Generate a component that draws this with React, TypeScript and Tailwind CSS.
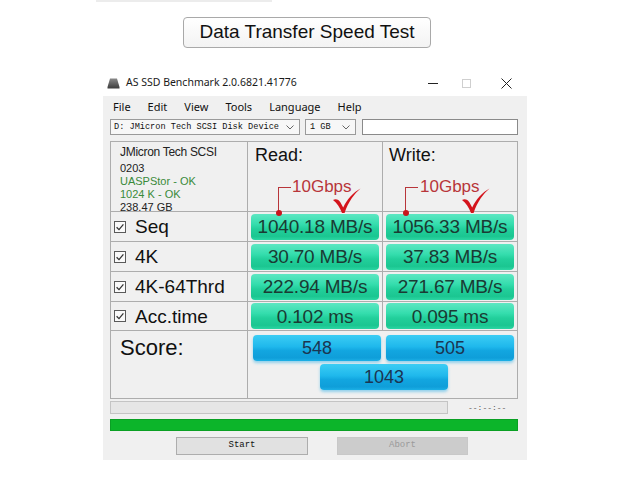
import React from "react";

const sans = "font-['Liberation_Sans',Arial,sans-serif]";
const ui = "font-['Noto_Sans','Liberation_Sans',sans-serif]";
const mono = "font-['Liberation_Mono','Courier_New',monospace]";

function CheckBox() {
  return (
    <svg width="12" height="12" viewBox="0 0 12 12" className="shrink-0">
      <rect x="0.5" y="0.5" width="11" height="11" fill="#fafafa" stroke="#5a5a5a" />
      <path d="M2.6 6.2 L5 8.6 L9.4 3.4" fill="none" stroke="#333" strokeWidth="1.3" />
    </svg>
  );
}

function Val({ v }: { v: string }) {
  return (
    <div className="h-[26px] w-full rounded-[4px] bg-[linear-gradient(to_bottom,#5de7c2_0%,#34ddad_40%,#22cf9b_58%,#1bc691_86%,#2bd6a3_100%)] flex items-center justify-center text-[19px] leading-none text-[#1a3b33] tracking-[-0.2px]">
      {v}
    </div>
  );
}

function Score({ v, w = "w-[128px]" }: { v: string; w?: string }) {
  return (
    <div
      className={`${w} h-[26px] rounded-[4px] bg-[linear-gradient(to_bottom,#3ccdf4_0%,#1fb8ec_45%,#12a6e0_60%,#0f9ed9_88%,#1cb0e6_100%)] shadow-[0_2px_3px_rgba(30,170,230,0.45)] flex items-center justify-center text-[18px] leading-none text-[#1b3552]`}
    >
      {v}
    </div>
  );
}

function RedCheck({ x }: { x: number }) {
  return (
    <svg
      width="28"
      height="26"
      viewBox="0 0 28 26"
      className="absolute"
      style={{ left: x, top: 46 }}
    >
      <path
        d="M0 12 C3 10.5 5.5 11.5 7.5 14.5 L10.2 19.5 C14 11.5 20 4.5 27.5 0.5 C21 6 15.5 13.5 11.6 25 L9 25 C6.8 19.5 4 15 0 12 Z"
        fill="#d4141c"
      />
    </svg>
  );
}

function Bracket({ x }: { x: number }) {
  return (
    <>
      <div className="absolute w-[1px] h-[26px] bg-[#b8353a]" style={{ left: x, top: 45 }} />
      <div className="absolute h-[1px] w-[13px] bg-[#b8353a]" style={{ left: x, top: 45 }} />
      <div className="absolute w-[6px] h-[6px] rounded-full bg-[#c8141c]" style={{ left: x - 2.5, top: 68 }} />
    </>
  );
}

const rows: [string, string, string][] = [
  ["Seq", "1040.18 MB/s", "1056.33 MB/s"],
  ["4K", "30.70 MB/s", "37.83 MB/s"],
  ["4K-64Thrd", "222.94 MB/s", "271.67 MB/s"],
  ["Acc.time", "0.102 ms", "0.095 ms"],
];

export default function App() {
  return (
    <div className={`w-[640px] h-[480px] bg-white overflow-hidden ${sans}`}>
      {/* faint rule along the top edge */}
      <div className="ml-[96px] w-[176px] h-[2px] bg-[#ececec]" />

      {/* caption button */}
      <div className="mt-[15px] ml-[183px] w-[248px] h-[31px] rounded-[4px] border border-[#a9a9a9] bg-[linear-gradient(to_bottom,#ffffff,#f3f3f3)] flex items-center justify-center text-[19px] text-[#111]">
        Data Transfer Speed Test
      </div>

      {/* benchmark window */}
      <div className="mt-[22px] ml-[103px] w-[424px]">
        {/* title bar */}
        <div className={`h-[26px] bg-white flex items-center ${ui}`}>
          <svg width="13" height="11" viewBox="0 0 13 11" className="ml-[4px]">
            <defs>
              <linearGradient id="disk" x1="0" y1="0" x2="0" y2="1">
                <stop offset="0" stopColor="#8a8a8a" />
                <stop offset="1" stopColor="#3c3c3c" />
              </linearGradient>
            </defs>
            <path d="M3 0.5 H10 L12.5 9 V10.5 H0.5 V9 Z" fill="url(#disk)" />
          </svg>
          <span className="ml-[6px] text-[10.5px] text-[#1a1a1a]">AS SSD Benchmark 2.0.6821.41776</span>
          <div className="flex-1" />
          <div className="w-[10px] h-[1px] bg-[#222]" />
          <div className="ml-[24px] w-[9px] h-[9px] border border-[#cfcfcf]" />
          <svg width="11" height="11" viewBox="0 0 11 11" className="ml-[30px] mr-[15px]">
            <path d="M0.5 0.5 L10.5 10.5 M10.5 0.5 L0.5 10.5" stroke="#222" strokeWidth="1" />
          </svg>
        </div>

        {/* window body */}
        <div className="h-[364px] bg-[#f0f0f0] px-[7px]">
          {/* menu */}
          <div className={`h-[23px] flex items-center gap-[17px] pl-[3px] text-[11px] text-[#111] ${ui}`}>
            <span>File</span>
            <span>Edit</span>
            <span>View</span>
            <span>Tools</span>
            <span>Language</span>
            <span>Help</span>
          </div>

          {/* drive / size / path */}
          <div className={`h-[16px] flex ${mono} text-[8.6px] text-[#111]`}>
            <div className="w-[190px] h-full border border-[#9a9a9a] bg-[#f7f7f7] flex items-center pl-[3px]">
              <span className="flex-1">D: JMicron Tech SCSI Disk Device</span>
              <svg width="8" height="5" viewBox="0 0 8 5" className="mr-[5px]">
                <path d="M0.5 0.5 L4 4 L7.5 0.5" fill="none" stroke="#666" />
              </svg>
            </div>
            <div className="ml-[5px] w-[51px] h-full border border-[#9a9a9a] bg-[#f7f7f7] flex items-center pl-[4px]">
              <span className="flex-1">1 GB</span>
              <svg width="8" height="5" viewBox="0 0 8 5" className="mr-[5px]">
                <path d="M0.5 0.5 L4 4 L7.5 0.5" fill="none" stroke="#666" />
              </svg>
            </div>
            <div className="ml-[6px] w-[156px] h-full border border-[#8a8a8a] bg-white" />
          </div>

          {/* results grid */}
          <div className="relative mt-[6px] w-[408px] border-l border-t border-[#adadad] grid grid-cols-[137px_135px_135px] grid-rows-[70px_30px_30px_30px_29px_68px]">
            {/* header row */}
            <div className="border-r border-b border-[#adadad] pl-[9px] pt-[3px] flex flex-col text-[11px] leading-[13px] text-[#222]">
              <span className="text-[12px] leading-[15px] tracking-[-0.3px]">JMicron Tech SCSI</span>
              <span className="mt-[2px]">0203</span>
              <span className="text-[#3a8a3a]">UASPStor - OK</span>
              <span className="text-[#3a8a3a]">1024 K - OK</span>
              <span className="leading-[12px]">238.47 GB</span>
            </div>
            <div className="border-r border-b border-[#adadad] pl-[7px] pt-[2px] text-[18px] leading-[22px] text-[#111]">Read:</div>
            <div className="border-r border-b border-[#adadad] pl-[6px] pt-[2px] text-[18px] leading-[22px] text-[#111]">Write:</div>

            {rows.map(([label, r, w]) => (
              <React.Fragment key={label}>
                <div className="border-r border-b border-[#adadad] flex items-center pl-[3px] gap-[9px] text-[19px] leading-none text-[#111]">
                  <CheckBox />
                  <span>{label}</span>
                </div>
                <div className="border-r border-b border-[#adadad] flex items-center px-[3px]">
                  <Val v={r} />
                </div>
                <div className="border-r border-b border-[#adadad] flex items-center px-[3px]">
                  <Val v={w} />
                </div>
              </React.Fragment>
            ))}

            {/* score row */}
            <div className="border-r border-b border-[#adadad] pl-[9px] pt-[4px] text-[22px] leading-[26px] text-[#111]">Score:</div>
            <div className="col-span-2 border-r border-b border-[#adadad] pt-[4px] pl-[5px] flex flex-col">
              <div className="flex gap-[5px]">
                <Score v="548" />
                <Score v="505" />
              </div>
              <div className="mt-[3px] ml-[67px]">
                <Score v="1043" />
              </div>
            </div>

            {/* link-speed callouts */}
            <Bracket x={167} />
            <span className="absolute left-[181px] top-[34px] text-[17px] leading-[22px] text-[#b8353a]">10Gbps</span>
            <RedCheck x={222} />
            <Bracket x={294} />
            <span className="absolute left-[309px] top-[34px] text-[17px] leading-[22px] text-[#b8353a]">10Gbps</span>
            <RedCheck x={351} />
          </div>

          {/* progress */}
          <div className="mt-[2px] flex items-center h-[13px]">
            <div className="w-[338px] h-full border border-[#c4c4c4] bg-[#e6e6e6]" />
            <span className={`ml-[20px] text-[8px] text-[#555] ${mono}`}>--:--:--</span>
          </div>
          <div className="mt-[5px] w-[408px] h-[12px] bg-[#0cb52a] border border-[#0aa024]" />

          {/* actions */}
          <div className={`mt-[6px] flex ${mono} text-[9px]`}>
            <div className="ml-[66px] w-[132px] h-[18px] border border-[#adadad] bg-[#e1e1e1] flex items-center justify-center text-[#111]">
              Start
            </div>
            <div className="ml-[29px] w-[131px] h-[18px] border border-[#c8c8c8] bg-[#cccccc] flex items-center justify-center text-[#9a9a9a]">
              Abort
            </div>
          </div>
        </div>
      </div>
    </div>
  );
}
